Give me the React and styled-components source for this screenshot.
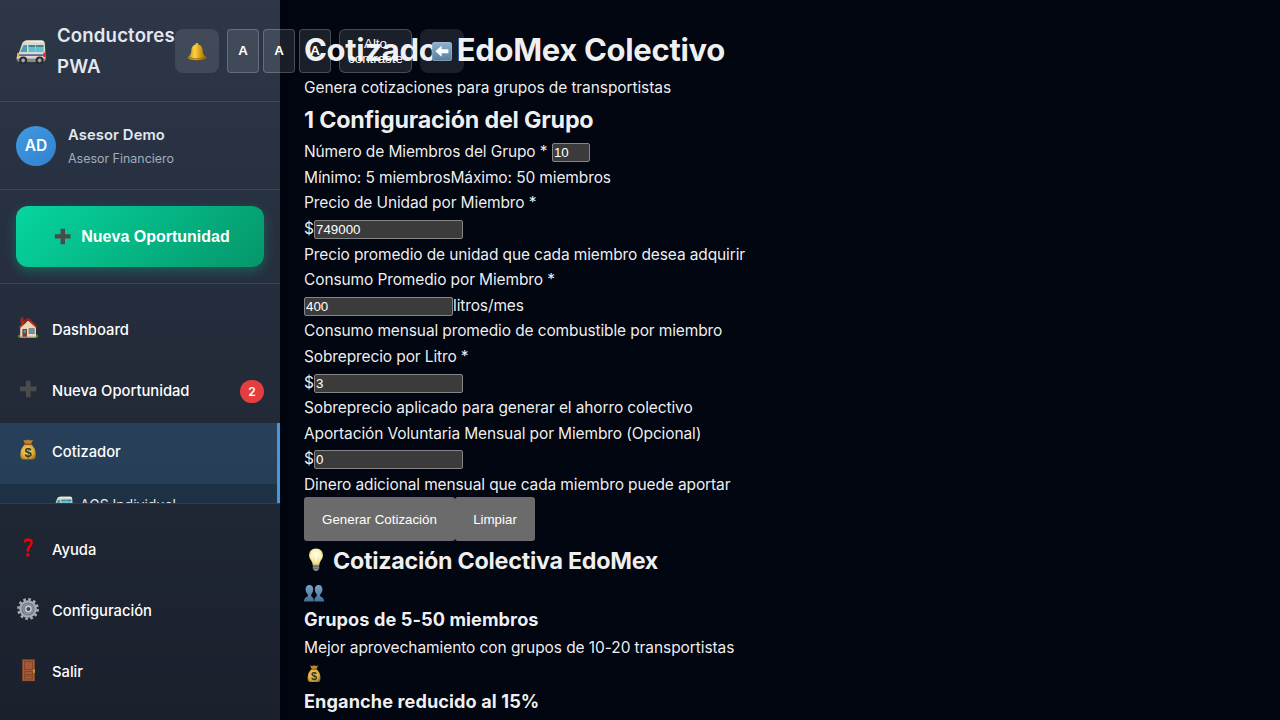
import React from 'react';
import styled, { createGlobalStyle, css } from 'styled-components';

const GlobalStyle = createGlobalStyle`
  *, *::before, *::after { box-sizing: border-box; margin: 0; padding: 0; }
  html, body { height: 100%; overflow: hidden; }
  body {
    background: #020611;
    color: rgba(255, 255, 255, 0.95);
    font-family: Inter, 'Liberation Sans', sans-serif;
    font-size: 15.5px;
    line-height: 1.6;
  }
  svg { display: block; flex: none; }
`;

/* ---------- icons ---------- */

const VanIcon = ({ size }) => (
  <svg width={size} height={size} viewBox="0 0 30 30">
    <path d="M6.5 4.5Q8 2.5 11 2.5H26Q28.5 2.5 28.8 5L29.6 19Q29.6 23 27 23.5H3Q.4 23 .6 19.5Q.8 16 3.2 14Z" fill="#dcd9cc" />
    <path d="M8 3.6Q9 2.7 11 2.6H26Q28 2.6 28.4 4.6Z" fill="#f5f0df" />
    <path d="M4.2 14L7.6 7H11V14Z" fill="#4e9eae" />
    <path d="M12.5 7H27.5V14H12.5Z" fill="#62bfcb" />
    <path d="M12.5 7H27.5V9H12.5Z" fill="#3c8698" />
    <path d="M19.6 7V14" stroke="#8fd6df" strokeWidth=".8" />
    <path d="M2.5 16.2H29.2V18H1.4Z" fill="#5966b1" />
    <rect x="1" y="15" width="2.2" height="4" rx="1" fill="#f3b427" />
    <rect x="27.4" y="14.6" width="2.2" height="4.6" rx=".8" fill="#ed2430" />
    <path d="M.8 20.5H29.4V22.3Q29 23.6 27 23.6H3Q1 23.6 .8 22Z" fill="#8a8b88" />
    <g fill="#26282b">
      <circle cx="7.2" cy="22.4" r="4" />
      <circle cx="23.6" cy="22.4" r="4" />
    </g>
    <g fill="#b2b5b8" stroke="#6c7075" strokeWidth=".9">
      <circle cx="7.2" cy="22.4" r="1.8" />
      <circle cx="23.6" cy="22.4" r="1.8" />
    </g>
  </svg>
);

const BellIcon = () => (
  <svg width="20" height="20" viewBox="0 0 20 20">
    <defs>
      <linearGradient id="bell" x1="0" x2="1">
        <stop offset="0" stopColor="#b98009" />
        <stop offset=".38" stopColor="#f8d443" />
        <stop offset=".62" stopColor="#dfa617" />
        <stop offset="1" stopColor="#966307" />
      </linearGradient>
    </defs>
    <ellipse cx="10" cy="18.4" rx="2.5" ry="1.5" fill="#8a5606" />
    <path d="M10 2Q8.6 2 8.5 3.4Q4.6 4.4 4.4 9Q4.3 13.6 1.7 15.4Q0 16.4 .8 17.2Q2.6 18.8 10 18.8T19.2 17.2Q20 16.4 18.3 15.4Q15.7 13.6 15.6 9Q15.4 4.4 11.5 3.4Q11.4 2 10 2Z" fill="url(#bell)" />
    <path d="M1.4 16Q5 18 10 18T18.6 16" fill="none" stroke="#8a5a08" strokeWidth=".8" />
  </svg>
);

const ArrowIcon = () => (
  <svg width="20" height="20" viewBox="0 0 20 20">
    <defs>
      <linearGradient id="arrow" x1="0" y1="0" x2="0" y2="1">
        <stop offset="0" stopColor="#8fb4cf" />
        <stop offset="1" stopColor="#587c9b" />
      </linearGradient>
    </defs>
    <rect y="1" width="20" height="19" rx="2.6" fill="url(#arrow)" />
    <rect x=".5" y="1.5" width="19" height="18" rx="2.2" fill="none" stroke="#a9c4d8" strokeOpacity=".45" />
    <path d="M3.3 10.3L9.6 4.8V8.3H16.4V12.3H9.6V15.8Z" fill="#fff" />
  </svg>
);

const PlusIcon = ({ size }) => (
  <svg width={size} height={size} viewBox="0 0 24 24">
    <path d="M10 3.8H14.6V9.6H20.4V14.2H14.6V20.2H10V14.2H4V9.6H10Z" fill="#4b4b4b" />
  </svg>
);

const HouseIcon = () => (
  <svg width="24" height="24" viewBox="0 0 24 24">
    <path d="M1.8 20.2Q2.6 17.6 5 19H19.6Q21.6 17.6 22.4 20.6L22 21.4H2Z" fill="#4f8a2b" />
    <rect x="4.6" y="1.6" width="3" height="6" fill="#9e2e22" />
    <path d="M4.2 11L11.8 4.2L20 11V21.4H4.2Z" fill="#ead9b8" />
    <path d="M2.8 11.4L9.2 3.2Q10.4 2.2 13 2.2L21 10.8L19.8 11.8L12 4.6L4 12.2Z" fill="#b53327" />
    <path d="M9.2 3.2L13 2.2L16 5.4L12 4.6L7 9.4Z" fill="#8c231c" />
    <rect x="6.4" y="13" width="4.6" height="8.2" fill="#7c4023" />
    <rect x="7.7" y="14" width="2.2" height="2.8" fill="#4b97c3" />
    <rect x="13" y="12.6" width="5.2" height="5" fill="#5098cf" stroke="#96795d" strokeWidth=".8" />
    <path d="M4.2 20.6H20V21.6H4.2Z" fill="#a58f73" />
  </svg>
);

const MoneyIcon = ({ size }) => (
  <svg width={size} height={size} viewBox="0 0 24 24">
    <defs>
      <radialGradient id="bag" cx=".45" cy=".45" r=".65">
        <stop offset="0" stopColor="#f9dc74" />
        <stop offset=".65" stopColor="#d9a935" />
        <stop offset="1" stopColor="#996815" />
      </radialGradient>
    </defs>
    <path d="M7.2 1.8L9.8 2.4L12 1.4L14.2 2.5L17 1.8L14.8 6.4H9.4Z" fill="#b98735" />
    <path d="M9.4 6H14.8Q19.7 9.8 19.8 16.6Q19.9 21.6 16.8 21.6H7.2Q4.2 21.6 4.3 16.6Q4.5 9.8 9.4 6Z" fill="url(#bag)" />
    <path d="M8.8 6.3H15.2" stroke="#96551b" strokeWidth="1.4" strokeLinecap="round" />
    <text x="12" y="18.9" textAnchor="middle" fontFamily="Liberation Sans, sans-serif" fontWeight="700" fontSize="13" fill="#3d3319">$</text>
  </svg>
);

const QuestionIcon = () => (
  <svg width="24" height="24" viewBox="0 0 24 24">
    <path d="M8.9 5.4Q9.4 3.5 12.2 3.5Q15.8 3.7 15.6 7Q15.5 8.9 13.6 10.5Q11.8 12 11.9 14.6" fill="none" stroke="#e60505" strokeWidth="2.5" strokeLinecap="round" />
    <circle cx="11.8" cy="18.9" r="1.8" fill="#e60505" />
  </svg>
);

const GearIcon = () => (
  <svg width="24" height="24" viewBox="0 0 24 24">
    <circle cx="12" cy="12" r="9.6" fill="none" stroke="#a7b0ba" strokeWidth="2.6" strokeDasharray="2.6 2.427" />
    <circle cx="12" cy="12" r="6.9" fill="#7c858f" stroke="#a5aeb7" strokeWidth="3.8" />
    <circle cx="12" cy="12" r="6" fill="none" stroke="#707982" strokeWidth="1.2" />
    <circle cx="12.4" cy="12" r="2.7" fill="#3a434e" stroke="#cbd1d7" strokeWidth="1.4" />
  </svg>
);

const DoorIcon = () => (
  <svg width="24" height="24" viewBox="0 0 24 24">
    <rect x="6" y="1.2" width="13" height="22" fill="#7f4429" />
    <rect x="7" y="2.2" width="11" height="20.4" fill="#a85e3d" />
    <g fill="#a45a3a" stroke="#7d4328" strokeWidth=".9">
      <rect x="8.4" y="3.6" width="8.2" height="8" />
      <rect x="8.4" y="13.6" width="8.2" height="3" />
      <rect x="8.4" y="18" width="8.2" height="3" />
    </g>
    <rect x="17" y="11.2" width="2" height="3.8" rx=".8" fill="#bd9b23" />
  </svg>
);

const BulbIcon = () => (
  <svg width="24" height="24" viewBox="0 0 24 24">
    <defs>
      <radialGradient id="bulb" cx=".5" cy=".42" r=".6">
        <stop offset="0" stopColor="#fffef2" />
        <stop offset=".55" stopColor="#fdf3b9" />
        <stop offset="1" stopColor="#e5c766" />
      </radialGradient>
    </defs>
    <path d="M12 .4Q19 .8 19 7.2Q18.9 10.4 16.6 13Q15.5 14.4 15.3 17H8.7Q8.5 14.4 7.4 13Q5.1 10.4 5 7.2Q5 .8 12 .4Z" fill="url(#bulb)" />
    <path d="M8.8 16.8H15.2V20.6Q14.8 22.8 12 23.2Q9.2 22.8 8.8 20.6Z" fill="#8b8b89" />
    <path d="M8.8 18.4H15.2M9 20.4H15" stroke="#55565a" strokeWidth=".7" />
    <path d="M10.2 14L9.8 9M13.8 14L14.2 9" stroke="#e8cc74" strokeWidth=".6" />
  </svg>
);

const PeopleIcon = () => (
  <svg width="20" height="20" viewBox="0 0 20 20">
    <defs>
      <linearGradient id="people" x1="0" y1="0" x2="0" y2="1">
        <stop offset="0" stopColor="#79a2c4" />
        <stop offset="1" stopColor="#456f97" />
      </linearGradient>
    </defs>
    <g fill="url(#people)">
      <path d="M5.4 2Q9.3 2.2 9.2 6.6Q9 10 7.3 11.6V13.6Q9.8 14.4 9.8 18.6H0Q0 14.4 3.8 13.6V11.6Q1.5 10 1.5 6.6Q1.6 2.2 5.4 2Z" />
      <path d="M14.6 2Q10.7 2.2 10.8 6.6Q11 10 12.7 11.6V13.6Q10.2 14.4 10.2 18.6H20Q20 14.4 16.2 13.6V11.6Q18.5 10 18.5 6.6Q18.4 2.2 14.6 2Z" />
    </g>
  </svg>
);

/* ---------- shell ---------- */

const Shell = styled.div`
  display: grid;
  grid-template-columns: 280px 1fr;
  height: 720px;
  overflow: hidden;
`;

const Sidebar = styled.aside`
  position: relative;
  z-index: 2;
  display: flex;
  flex-direction: column;
  height: 720px;
  background: linear-gradient(180deg, #2d3748 0%, #1a202c 100%);
  box-shadow: 2px 0 10px rgba(0, 0, 0, 0.3);
  color: #fff;
`;

const SidebarHeader = styled.header`
  display: flex;
  flex: none;
  align-items: center;
  height: 102px;
  padding: 0 16px;
  border-bottom: 1px solid rgba(255, 255, 255, 0.1);
`;

const Brand = styled.div`
  display: flex;
  flex: none;
  align-items: center;
  gap: 11px;
  width: 159px;

  svg { margin-top: 4px; }
`;

const BrandName = styled.h2`
  font-size: 18.6px;
  font-weight: 600;
  line-height: 30.7px;
  letter-spacing: 0.15px;
  color: #e2e8f0;
`;

const HeaderTools = styled.div`
  display: flex;
  flex: none;
  gap: 8px;
`;

const SizeGroup = styled.div`
  display: flex;
  gap: 4px;
`;

const ToolButton = styled.button`
  display: flex;
  align-items: center;
  justify-content: center;
  flex: none;
  width: ${(p) => p.$width}px;
  height: 44px;
  border: ${(p) => (p.$outlined ? '1px solid rgba(255, 255, 255, 0.2)' : '0')};
  border-radius: ${(p) => p.$radius || 8}px;
  background: rgba(255, 255, 255, 0.1);
  color: #fff;
  font: ${(p) => (p.$bold ? '700' : '400')} 13.333px/15px 'Liberation Sans', sans-serif;
  text-align: center;
`;

const Profile = styled.section`
  display: flex;
  flex: none;
  align-items: center;
  gap: 12px;
  height: 88px;
  padding: 0 16px;
  border-bottom: 1px solid rgba(255, 255, 255, 0.1);
`;

const Avatar = styled.div`
  display: grid;
  place-items: center;
  width: 40px;
  height: 40px;
  margin-top: 1px;
  border-radius: 50%;
  background: linear-gradient(135deg, #4299e1, #3182ce);
  font-weight: 600;
`;

const ProfileText = styled.div`
  padding-top: 2px;
`;

const ProfileName = styled.div`
  margin-bottom: 2px;
  color: #e2e8f0;
  font-size: 14.75px;
  font-weight: 600;
  line-height: 24px;
  letter-spacing: 0.11px;
`;

const ProfileRole = styled.div`
  color: #a0aec0;
  font-size: 12.45px;
  line-height: 20.5px;
`;

const PrimaryAction = styled.section`
  flex: none;
  height: 94px;
  padding: 16px;
  border-bottom: 1px solid rgba(255, 255, 255, 0.1);
`;

const PrimaryButton = styled.button`
  display: flex;
  align-items: center;
  justify-content: center;
  gap: 7px;
  width: 100%;
  height: 61px;
  padding-left: 1px;
  border: 0;
  border-radius: 12px;
  background: linear-gradient(135deg, #06d6a0, #059669);
  box-shadow: 0 4px 12px rgba(6, 214, 160, 0.3);
  color: #fff;
  font: 700 16px 'Liberation Sans', sans-serif;
`;

const Nav = styled.nav`
  flex: 1;
  min-height: 0;
  padding-top: 17px;
  overflow: hidden;
`;

const SidebarFooter = styled.footer`
  flex: none;
  height: 217px;
  padding-top: 17px;
  border-top: 1px solid rgba(255, 255, 255, 0.1);
`;

const NavGroup = styled.div`
  ${(p) =>
    p.$active &&
    css`
      background: rgba(66, 153, 225, 0.2);
      border-right: 3px solid #4299e1;
    `}
`;

const NavItem = styled.a`
  display: flex;
  align-items: center;
  gap: 12px;
  height: 61px;
  padding: 0 16px 2px;
  font-size: 14.75px;
  font-weight: 500;

  svg { margin-top: -5px; }
`;

const Badge = styled.span`
  width: 24px;
  height: 23px;
  margin-top: -1px;
  margin-left: auto;
  border-radius: 12px;
  background: #e53e3e;
  font-size: 12px;
  font-weight: 600;
  line-height: 23px;
  text-align: center;
`;

const SubNav = styled.div`
  height: 120px;
  padding: 9px 16px 0 53px;
  background: rgba(0, 0, 0, 0.2);
`;

const SubNavItem = styled.a`
  display: flex;
  align-items: flex-start;
  gap: 7px;
  color: #e2e8f0;
  font-size: 14px;
  line-height: 23px;

  svg { margin-top: 2px; }
`;

/* ---------- main ---------- */

const Main = styled.main`
  height: 720px;
  padding: 24px;
  overflow: hidden;
`;

const Title = styled.h1`
  height: 51.2px;
  font-size: 31px;
  font-weight: 700;
  line-height: 52px;
  letter-spacing: -0.32px;
`;

const SectionTitle = styled.h2`
  display: flex;
  align-items: center;
  gap: 5px;
  height: 38.4px;
  font-size: 23.3px;
  font-weight: 700;
  line-height: 39px;
  letter-spacing: ${(p) => p.$tracking}px;

  svg { margin-top: -2px; }
`;

const CardTitle = styled.h3`
  height: 29.95px;
  font-size: 18.15px;
  font-weight: 700;
  line-height: 29.5px;
  letter-spacing: 0.09px;
`;

const Line = styled.div`
  display: flex;
  align-items: center;
  height: 25.6px;
  line-height: 25.6px;
  letter-spacing: ${(p) => p.$tracking ?? -0.12}px;
  white-space: pre;
`;

const Currency = styled.span`
  width: 10px;
`;

const Field = styled.input`
  width: ${(p) => (p.$narrow ? 38 : 149)}px;
  height: 19px;
  margin-top: 1.4px;
  margin-left: ${(p) => (p.$narrow ? 4.5 : 0)}px;
  padding: 1px;
  border: 1px solid #858585;
  border-radius: 2px;
  background: #3b3b3b;
  color: #fff;
  font: 13.333px 'Liberation Sans', sans-serif;
`;

const Actions = styled.div`
  display: flex;
  margin: -0.6px 0 0.6px;
`;

const ActionButton = styled.button`
  width: ${(p) => p.$width}px;
  height: 44px;
  padding-top: 1.5px;
  border: 0;
  border-radius: 3px;
  background: #6b6b6b;
  color: #fff;
  font: 13.333px 'Liberation Sans', sans-serif;
`;

function FormField({ label, value, prefix, suffix, hint }) {
  return (
    <>
      <Line as="label">{label}</Line>
      <Line>
        {prefix && <Currency>{prefix}</Currency>}
        <Field defaultValue={value} />
        {suffix}
      </Line>
      <Line>{hint}</Line>
    </>
  );
}

export default function App() {
  return (
    <>
      <GlobalStyle />
      <Shell>
        <Sidebar>
          <SidebarHeader>
            <Brand>
              <VanIcon size={30} />
              <BrandName>Conductores PWA</BrandName>
            </Brand>
            <HeaderTools>
              <ToolButton $width={44}><BellIcon /></ToolButton>
              <SizeGroup>
                <ToolButton $width={32} $radius={4} $outlined $bold>A</ToolButton>
                <ToolButton $width={32} $radius={4} $outlined $bold>A</ToolButton>
                <ToolButton $width={32} $radius={4} $outlined $bold>A</ToolButton>
              </SizeGroup>
              <ToolButton $width={73} $radius={6} $outlined>Alto contraste</ToolButton>
              <ToolButton $width={44}><ArrowIcon /></ToolButton>
            </HeaderTools>
          </SidebarHeader>

          <Profile>
            <Avatar>AD</Avatar>
            <ProfileText>
              <ProfileName>Asesor Demo</ProfileName>
              <ProfileRole>Asesor Financiero</ProfileRole>
            </ProfileText>
          </Profile>

          <PrimaryAction>
            <PrimaryButton><PlusIcon size={23} />Nueva Oportunidad</PrimaryButton>
          </PrimaryAction>

          <Nav>
            <NavItem><HouseIcon />Dashboard</NavItem>
            <NavItem><PlusIcon size={24} />Nueva Oportunidad<Badge>2</Badge></NavItem>
            <NavGroup $active>
              <NavItem><MoneyIcon size={24} />Cotizador</NavItem>
              <SubNav>
                <SubNavItem><VanIcon size={20} />AGS Individual</SubNavItem>
              </SubNav>
            </NavGroup>
          </Nav>

          <SidebarFooter>
            <NavItem><QuestionIcon />Ayuda</NavItem>
            <NavItem><GearIcon />Configuración</NavItem>
            <NavItem><DoorIcon />Salir</NavItem>
          </SidebarFooter>
        </Sidebar>

        <Main>
          <Title>Cotizador EdoMex Colectivo</Title>
          <Line $tracking={-0.09}>Genera cotizaciones para grupos de transportistas</Line>
          <SectionTitle $tracking={-0.2}>1 Configuración del Grupo</SectionTitle>
          <Line>Número de Miembros del Grupo *<Field $narrow defaultValue="10" /></Line>
          <Line>Mínimo: 5 miembrosMáximo: 50 miembros</Line>
          <FormField label="Precio de Unidad por Miembro *" prefix="$" value="749000" hint="Precio promedio de unidad que cada miembro desea adquirir" />
          <FormField label="Consumo Promedio por Miembro *" value="400" suffix="litros/mes" hint="Consumo mensual promedio de combustible por miembro" />
          <FormField label="Sobreprecio por Litro *" prefix="$" value="3" hint="Sobreprecio aplicado para generar el ahorro colectivo" />
          <FormField label="Aportación Voluntaria Mensual por Miembro (Opcional)" prefix="$" value="0" hint="Dinero adicional mensual que cada miembro puede aportar" />
          <Actions>
            <ActionButton $width={151}>Generar Cotización</ActionButton>
            <ActionButton $width={80}>Limpiar</ActionButton>
          </Actions>
          <SectionTitle $tracking={-0.27}><BulbIcon />Cotización Colectiva EdoMex</SectionTitle>
          <Line><PeopleIcon /></Line>
          <CardTitle>Grupos de 5-50 miembros</CardTitle>
          <Line $tracking={-0.08}>Mejor aprovechamiento con grupos de 10-20 transportistas</Line>
          <Line><MoneyIcon size={20} /></Line>
          <CardTitle>Enganche reducido al 15%</CardTitle>
        </Main>
      </Shell>
    </>
  );
}
